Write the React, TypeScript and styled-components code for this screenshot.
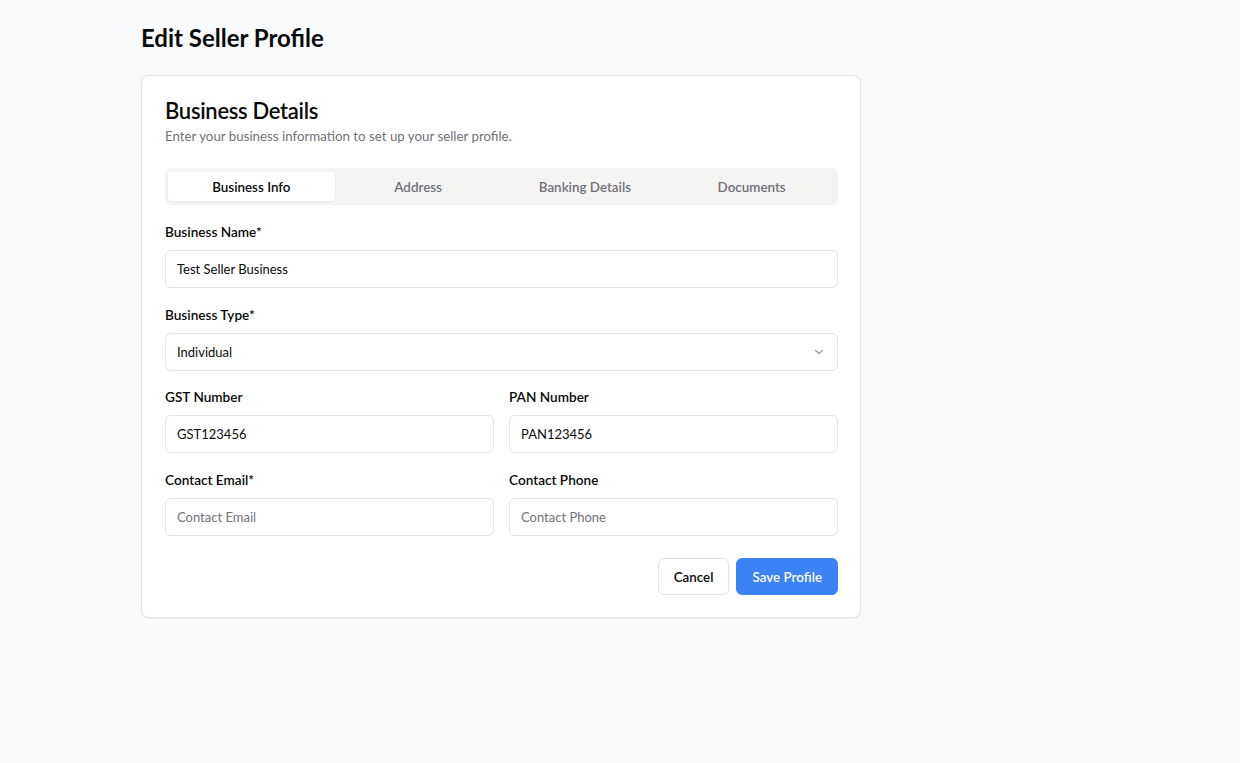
import React from "react";
import styled, { createGlobalStyle } from "styled-components";

const Global = createGlobalStyle`
  * { box-sizing: border-box; }
  html, body { margin: 0; padding: 0; background: #f9fafb; }
  body { font-family: Lato, "Noto Sans", Arial, sans-serif; color: #0a0a0a; }
`;

const Page = styled.div`
  min-height: 763px;
  background: #f9fafb;
  padding: 22px 0 0 141px;
`;

const PageTitle = styled.h1`
  margin: 0 0 21px 0;
  font-size: 24px;
  line-height: 32px;
  font-weight: 700;
  color: #0a0a0a;
`;

const Card = styled.div`
  width: 720px;
  background: #fff;
  border: 1px solid #e4e4e7;
  border-radius: 8px;
  box-shadow: 0 1px 2px rgba(0, 0, 0, 0.05);
  padding: 20px 22px 22px 23px;
`;

const CardTitle = styled.h2`
  margin: 0;
  font-size: 22px;
  line-height: 30px;
  font-weight: 600;
  letter-spacing: -0.3px;
`;

const CardSub = styled.p`
  margin: 0;
  font-size: 13.3px;
  line-height: 20px;
  color: #71717a;
`;

const Tabs = styled.div`
  margin-top: 22px;
  display: grid;
  grid-template-columns: repeat(4, 1fr);
  background: #f4f4f3;
  border-radius: 6px;
  padding: 4px 3px;
  height: 37px;
`;

const Tab = styled.div<{ $active?: boolean }>`
  display: flex;
  align-items: center;
  justify-content: center;
  font-size: 13.4px;
  font-weight: 600;
  border-radius: 4px;
  color: ${(p) => (p.$active ? "#0a0a0a" : "#71717a")};
  background: ${(p) => (p.$active ? "#fff" : "transparent")};
  box-shadow: ${(p) => (p.$active ? "0 1px 2px rgba(0,0,0,0.06)" : "none")};
`;

const Form = styled.div`
  margin-top: 17px;
  display: flex;
  flex-direction: column;
  gap: 16.7px;
`;

const Row = styled.div`
  display: grid;
  grid-template-columns: 1fr 1fr;
  gap: 15px;
`;

const Field = styled.div`
  display: flex;
  flex-direction: column;
  gap: 8px;
`;

const Label = styled.label`
  font-size: 13.6px;
  line-height: 20px;
  font-weight: 600;
  color: #0a0a0a;
`;

const Input = styled.div<{ $placeholder?: boolean }>`
  height: 38px;
  border: 1px solid #e4e4e7;
  border-radius: 6px;
  padding: 0 11px;
  display: flex;
  align-items: center;
  justify-content: space-between;
  font-size: 13px;
  color: ${(p) => (p.$placeholder ? "#71717a" : "#0a0a0a")};
  background: #fff;
`;

const Actions = styled.div`
  display: flex;
  justify-content: flex-end;
  gap: 7px;
  margin-top: 5.3px;
`;

const Button = styled.button<{ $primary?: boolean }>`
  height: 37px;
  padding: 0 15px;
  border-radius: 6px;
  font-family: inherit;
  font-size: 13.4px;
  font-weight: 600;
  border: 1px solid ${(p) => (p.$primary ? "#3b82f6" : "#e4e4e7")};
  background: ${(p) => (p.$primary ? "#3b82f6" : "#fff")};
  color: ${(p) => (p.$primary ? "#fff" : "#0a0a0a")};
`;

const Chevron = () => (
  <svg width="14" height="14" viewBox="0 0 24 24" fill="none" stroke="#71717a" strokeWidth="2" strokeLinecap="round" strokeLinejoin="round" style={{ opacity: 0.7 }}>
    <path d="m6 9 6 6 6-6" />
  </svg>
);

export default function App() {
  return (
    <>
      <Global />
      <Page>
        <PageTitle>Edit Seller Profile</PageTitle>
        <Card>
          <CardTitle>Business Details</CardTitle>
          <CardSub>Enter your business information to set up your seller profile.</CardSub>
          <Tabs>
            <Tab $active>Business Info</Tab>
            <Tab>Address</Tab>
            <Tab>Banking Details</Tab>
            <Tab>Documents</Tab>
          </Tabs>
          <Form>
            <Field>
              <Label>Business Name*</Label>
              <Input>Test Seller Business</Input>
            </Field>
            <Field>
              <Label>Business Type*</Label>
              <Input>
                Individual
                <Chevron />
              </Input>
            </Field>
            <Row>
              <Field>
                <Label>GST Number</Label>
                <Input>GST123456</Input>
              </Field>
              <Field>
                <Label>PAN Number</Label>
                <Input>PAN123456</Input>
              </Field>
            </Row>
            <Row>
              <Field>
                <Label>Contact Email*</Label>
                <Input $placeholder>Contact Email</Input>
              </Field>
              <Field>
                <Label>Contact Phone</Label>
                <Input $placeholder>Contact Phone</Input>
              </Field>
            </Row>
            <Actions>
              <Button>Cancel</Button>
              <Button $primary>Save Profile</Button>
            </Actions>
          </Form>
        </Card>
      </Page>
    </>
  );
}
